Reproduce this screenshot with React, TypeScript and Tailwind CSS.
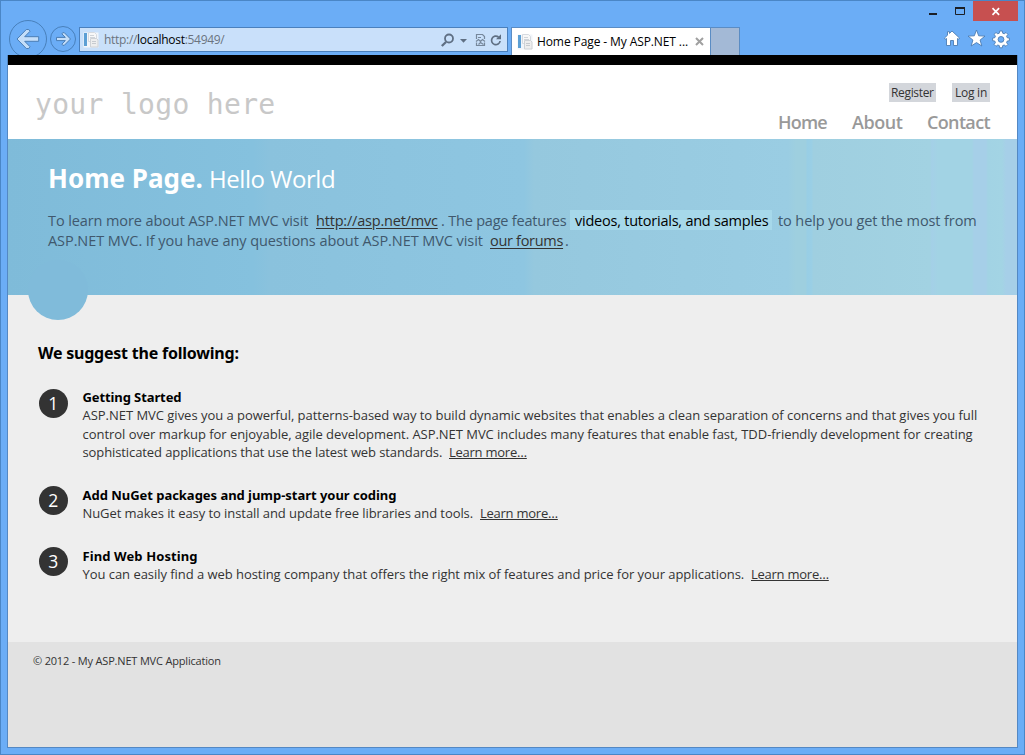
import type { ReactNode } from 'react';

function PageIcon() {
  return (
    <svg width="16" height="16" viewBox="0 0 16 16" className="shrink-0">
      <rect x="0.500" y="0.500" width="15" height="15" fill="#f1f5fa" />
      <rect x="1" y="1" width="3" height="13" fill="#5c9fd4" />
      <path d="M5.500.5h6l2 2v7h-8z" fill="#f8f8f8" stroke="#d6dae0" />
      <path d="M7 3.500h4M7 5.500h5" stroke="#d0d4d9" />
      <path d="M7.500 6.500h6l1.500 1.500v7h-7.500z" fill="#eeeeee" stroke="#cfd2d6" />
      <path d="M9 9.500h4M9 11.500h4" stroke="#c6cacf" />
    </svg>
  );
}

function NavButtons() {
  return (
    <svg width="71" height="54" viewBox="8 1 71 54" className="shrink-0 overflow-hidden">
      <circle cx="28" cy="39" r="18.500" fill="#6badf6" stroke="#4880bb" />
      <path
        d="M17 39 26.300 29.500h2.400l1.300 1.800-5.300 5.400h14v4.600h-14l5.300 5.400-1.300 1.800h-2.400z"
        fill="#c4def9"
        stroke="#4a7eb5"
      />
      <circle cx="63" cy="39" r="12.500" fill="#6badf6" stroke="#4880bb" />
      <path
        d="M70.500 39 64.300 32.700h-1.500l-.9 1.200 3.400 3.500h-8.800v3.200h8.800l-3.400 3.500.9 1.200h1.500z"
        fill="#c4def9"
        stroke="#4a7eb5"
      />
    </svg>
  );
}

function AddressIcons() {
  return (
    <svg width="67" height="22" viewBox="440 28 67 22" className="shrink-0" fill="none">
      <circle cx="449" cy="37.500" r="4" stroke="#5f6f83" strokeWidth="1.800" />
      <path d="M446 41l-4.200 4" stroke="#5f6f83" strokeWidth="2.400" />
      <path d="M460 38h7l-3.500 3.700z" fill="#5f6f83" />
      <path d="M476.500 38v-4.500h6l2 2V38M476.500 41.500v3h8v-3" stroke="#76879b" strokeWidth="1.200" />
      <path d="M476 40.500l2.500-2 2 2 2-2 2.500 2M478 36.500h3M478.500 43.500l2-2 3 2" stroke="#76879b" strokeWidth="1.200" />
      <path d="M498.500 36a4.300 4.300 0 1 0 1.600 4" stroke="#5f6f83" strokeWidth="1.700" />
      <path d="M501 33.200v5h-5z" fill="#5f6f83" />
    </svg>
  );
}

function Caption() {
  return (
    <svg width="96" height="54" viewBox="928 1 96 54" className="shrink-0">
      <rect x="929" y="13" width="8" height="2" fill="#1b1f26" />
      <path d="M955.500 7.500h9v7h-9z" fill="none" stroke="#1b1f26" />
      <path d="M955 8h10" stroke="#1b1f26" strokeWidth="2" />
      <rect x="973" y="1" width="45" height="20" fill="#c75050" />
      <path d="M992.500 8.200l6.600 6.600M999.100 8.200l-6.600 6.600" stroke="#fff" strokeWidth="1.700" />
      <g stroke="#4c7db3" strokeWidth="0.900">
        <path
          fill="#fff"
          d="M952 31l7.500 7-1 1.300-1-.8v7h-4v-5h-3v5h-4v-7l-1 .8-1-1.300 3-2.800v-3.500h2v1.700z"
        />
        <path
          fill="#fff"
          d="M976.500 30l2.200 5.800 6.300.3-4.900 3.900 1.700 6-5.300-3.400-5.300 3.400 1.700-6-4.900-3.900 6.300-.3z"
        />
        <path
          fill="#fff"
          d="M999.700 31h2.600l.4 2.200 1.500.6 1.800-1.300 1.900 1.900-1.300 1.800.6 1.500 2.200.4v2.600l-2.200.4-.6 1.500 1.300 1.800-1.900 1.900-1.800-1.300-1.500.6-.4 2.200h-2.600l-.4-2.200-1.500-.6-1.800 1.300-1.900-1.900 1.300-1.800-.6-1.500-2.200-.4v-2.600l2.200-.4.6-1.500-1.300-1.800 1.900-1.900 1.800 1.300 1.500-.6z"
        />
        <circle cx="1001" cy="39.400" r="2.900" fill="#6badf6" />
      </g>
    </svg>
  );
}

function BrowserBar() {
  return (
    <div className="flex h-[54px] items-start pl-[7px]">
      <NavButtons />
      <div className="mt-[26px] flex h-[25px] w-[429px] items-center border border-[#4a80bd] bg-[#c9e0fa] pl-[3px] text-[12px]">
        <PageIcon />
        <span className="ml-[5px] flex-1 whitespace-nowrap tracking-[-0.3px] text-[#6b7480]">
          http://<span className="text-black">localhost</span>:54949/
        </span>
        <AddressIcons />
      </div>
      <div className="ml-[3px] mt-[26px] flex h-[28px] w-[200px] items-center border border-b-0 border-[#5a8cc4] bg-white pl-[5px] text-[12px] text-black">
        <PageIcon />
        <span className="ml-[4px] w-[159px] whitespace-nowrap tracking-[-0.1px]">Home Page - My ASP.NET ...</span>
        <svg width="9" height="9" viewBox="0 0 9 9" className="-ml-[1px] shrink-0">
          <path d="M1 1l7 7M8 1l-7 7" stroke="#a0a0a0" strokeWidth="2" />
        </svg>
      </div>
      <div className="mt-[26px] h-[28px] w-[29px] border border-b-0 border-l-0 border-[#5a8cc4] bg-[#a3b9d6]" />
      <div className="flex-1" />
      <Caption />
    </div>
  );
}

function Item({ n, title, children }: { n: number; title: ReactNode; children: ReactNode }) {
  return (
    <li className="flex first:[&>span]:mt-px">
      <span className="flex h-[28.500px] w-[28.500px] shrink-0 items-center justify-center rounded-full bg-[#333] text-[17.500px] leading-none font-medium text-white">
        {n}
      </span>
      <div className="ml-[15px] whitespace-nowrap pb-[0.5px] text-[13px] leading-[18.5px]">
        <h5 className="h-[18px] font-['Noto_Sans',sans-serif] font-bold text-black">{title}</h5>
        {children}
      </div>
    </li>
  );
}

function Learn() {
  return <a className="tracking-[-0.25px] underline underline-offset-1">Learn more…</a>;
}

export default function App() {
  return (
    <div className="flex h-[755px] w-[1025px] flex-col overflow-hidden border border-[#4a86c6] bg-[#6badf6] font-['Open_Sans',sans-serif] text-[#333]">
      <BrowserBar />
      <div className="mx-[6px] flex h-[693px] flex-col border-x border-b border-[#5488c3] bg-[#eee]">
        <header className="flex h-[84px] shrink-0 justify-between border-t-[10px] border-black bg-white pl-[27px] pr-[27px]">
          <div className="mt-[21px] whitespace-nowrap font-['DejaVu_Sans_Mono',monospace] text-[28px] leading-[38px] tracking-[0.32px] text-[#c8c8c8]">
            your logo here
          </div>
          <div className="flex flex-col items-end">
            <div className="mt-[18px] flex h-[19px] gap-4 text-[12px] leading-[19px]">
              <a className="w-[47px] whitespace-nowrap bg-[#d3d6db] pl-[2px] tracking-[-0.33px]">Register</a>
              <a className="w-[38px] whitespace-nowrap bg-[#d3d6db] pl-[3px] tracking-[-0.25px]">Log in</a>
            </div>
            <nav className="mt-[7px] flex text-[18px] leading-[26px] font-semibold text-[#999]">
              <a className="w-[74px] tracking-[-0.8px]">Home</a>
              <a className="w-[75px] tracking-[-0.45px]">About</a>
              <a className="w-[63px] tracking-[-0.65px]">Contact</a>
            </nav>
          </div>
        </header>

        <section className="relative h-[156px] shrink-0 bg-[linear-gradient(90deg,#7fbbd9_0px,#85c1de_245px,#8ac2dd_262px,#8ec6e1_516px,#95c8de_526px,#9acde3_780px,#9ecfdf_788px,#9ecfdf_798px,#98cee5_799px,#9acfe5_804px,#9fcfe0_805px,#a2d2e2_922px,#a4d0e7_924px,#a2d3e4_930px,#a2d3e4_964px,#a6cfe8_966px,#a6cfe8_978px,#a2d3e4_980px,#a3d4e4_994px,#a6cfe8_998px,#a6cfe8_1009px)] pl-[40px] pt-[24px]">
          <div className="absolute left-[20px] top-[121px] h-[60px] w-[60px] rounded-full bg-[#80bbda]" />
          <div className="relative">
            <h1 className="flex h-[32px] items-baseline whitespace-nowrap leading-[31px] text-white">
              <span className="w-[161px] font-['Noto_Sans',sans-serif] text-[26px] font-bold">Home Page.</span>
              <span className="text-[24px] tracking-[-0.45px]">Hello World</span>
            </h1>
            <p className="mt-[15px] whitespace-nowrap text-[14.500px] leading-[22px] text-[#40586d]">
              <span className="flex h-5">
                <span className="w-[268px] tracking-[-0.1px]">To learn more about ASP.NET MVC visit</span>
                <a className="w-[125px] tracking-[-0.2px] text-[#333]">
                  <span className="underline underline-offset-2">http://asp.net/mvc</span>
                </a>
                <span className="w-[129px] tracking-[-0.2px]">. The page features</span>
                <span className="w-[202px] bg-[#a6d8ea] pl-[5px] tracking-[-0.23px] text-black">
                  videos, tutorials, and samples
                </span>
                <span className="ml-[6px] tracking-[-0.1px]">to help you get the most from</span>
              </span>
              <span className="flex h-5">
                <span className="w-[442px] tracking-[-0.07px]">
                  ASP.NET MVC. If you have any questions about ASP.NET MVC visit
                </span>
                <a className="w-[75px] tracking-[-0.3px] text-[#333]">
                  <span className="underline underline-offset-2">our forums</span>
                </a>
                <span>.</span>
              </span>
            </p>
          </div>
        </section>

        <main className="h-[347px] shrink-0 pl-[30px] pt-[46px]">
          <h3 className="h-[24px] whitespace-nowrap font-['Noto_Sans',sans-serif] text-[16px] leading-[24px] font-bold tracking-[-0.22px] text-black">
            We suggest the following:
          </h3>
          <ol className="ml-[1px] mt-[23px] flex flex-col gap-6">
            <Item n={1} title={<span className="tracking-[-0.1px]">Getting Started</span>}>
              <p className="tracking-[-0.025px]">
                ASP.NET MVC gives you a powerful, patterns-based way to build dynamic websites that enables a clean separation of concerns and that gives you full
              </p>
              <p className="tracking-[-0.04px]">
                control over markup for enjoyable, agile development. ASP.NET MVC includes many features that enable fast, TDD-friendly development for creating
              </p>
              <p className="flex">
                <span className="w-[366.500px] tracking-[-0.1px]">sophisticated applications that use the latest web standards.</span>
                <Learn />
              </p>
            </Item>
            <Item n={2} title={<span className="tracking-[-0.03px]">Add NuGet packages and jump-start your coding</span>}>
              <p className="flex">
                <span className="w-[397.500px] tracking-[-0.07px]">NuGet makes it easy to install and update free libraries and tools.</span>
                <Learn />
              </p>
            </Item>
            <Item n={3} title={<span className="tracking-[0.1px]">Find Web Hosting</span>}>
              <p className="flex">
                <span className="w-[668.500px] tracking-[-0.045px]">
                  You can easily find a web hosting company that offers the right mix of features and price for your applications.
                </span>
                <Learn />
              </p>
            </Item>
          </ol>
        </main>

        <footer className="flex-1 bg-[#e2e2e2] pl-[25px] pt-[10px] text-[11px] leading-[18px]">
          <p className="tracking-[-0.18px]">© 2012 - My ASP.NET MVC Application</p>
        </footer>
      </div>
    </div>
  );
}
